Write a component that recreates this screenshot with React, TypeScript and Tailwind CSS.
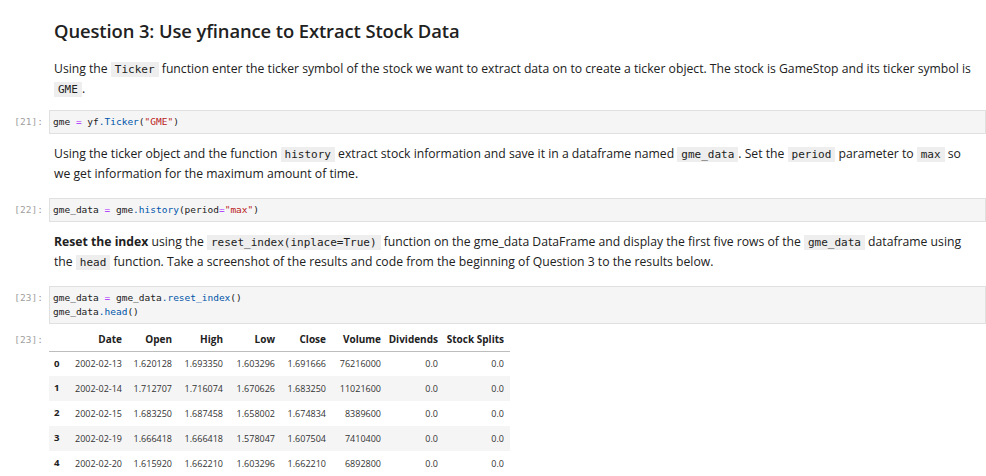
import React from "react";

const mono = "font-['DejaVu_Sans_Mono',monospace]";

const Code = ({ children }: { children: React.ReactNode }) => (
  <code className={`${mono} bg-[#eeeeee] px-[4px] py-[1px] text-[11px] leading-[12px] text-[#212121]`}>{children}</code>
);

const Prompt = ({ n }: { n: number }) => (
  <div className={`${mono} w-[49px] shrink-0 pr-[6px] text-right text-[9.5px] leading-[14px] text-[#a0a0a0]`}>
    [{n}]:
  </div>
);

const Op = ({ children }: { children: React.ReactNode }) => <span className="text-[#aa22ff]">{children}</span>;
const Prop = ({ children }: { children: React.ReactNode }) => <span className="text-[#0055aa]">{children}</span>;
const Str = ({ children }: { children: React.ReactNode }) => <span className="text-[#ba2121]">{children}</span>;

const CodeCell = ({ n, children, className = "" }: { n: number; children: React.ReactNode; className?: string }) => (
  <div className={`flex items-start ${className}`}>
    <div className="pt-[5px]">
      <Prompt n={n} />
    </div>
    <div
      className={`${mono} flex-1 border border-[#e0e0e0] bg-[#f5f5f5] px-[3px] py-[4px] text-[9.5px] leading-[14px] text-[#212121] whitespace-pre`}
    >
      {children}
    </div>
  </div>
);

const rows = [
  ["0", "2002-02-13", "1.620128", "1.693350", "1.603296", "1.691666", "76216000", "0.0", "0.0"],
  ["1", "2002-02-14", "1.712707", "1.716074", "1.670626", "1.683250", "11021600", "0.0", "0.0"],
  ["2", "2002-02-15", "1.683250", "1.687458", "1.658002", "1.674834", "8389600", "0.0", "0.0"],
  ["3", "2002-02-19", "1.666418", "1.666418", "1.578047", "1.607504", "7410400", "0.0", "0.0"],
  ["4", "2002-02-20", "1.615920", "1.662210", "1.603296", "1.662210", "6892800", "0.0", "0.0"],
];

const headers = ["", "Date", "Open", "High", "Low", "Close", "Volume", "Dividends", "Stock Splits"];
const widths = ["w-[16px]", "w-[63px]", "w-[50px]", "w-[51px]", "w-[52px]", "w-[51px]", "w-[55px]", "w-[57px]", "w-[66px]"];

export default function App() {
  return (
    <div className="h-[476px] w-[986px] overflow-hidden bg-white font-['Open_Sans',sans-serif] text-[#212121]">
      {/* HEADING */}
      <div className="pl-[54px] pt-[17px]">
        <h2 className="text-[18.4px] font-semibold leading-[28px] tracking-[-0.1px]">
          Question 3: Use yfinance to Extract Stock Data
        </h2>
        <p className="mt-[14px] whitespace-nowrap text-[12.2px] leading-[19.5px]">
          Using the <Code>Ticker</Code> function enter the ticker symbol of the stock we want to extract data on to create a ticker object. The stock is GameStop and its ticker symbol is
          <br />
          <Code>GME</Code>.
        </p>
      </div>

      <CodeCell n={21} className="mt-[12px]">
        gme <Op>=</Op> yf<Prop>.Ticker</Prop>(<Str>"GME"</Str>)
      </CodeCell>

      <div className="pl-[54px]">
        <p className="mt-[10px] whitespace-nowrap text-[12.2px] leading-[19.5px]">
          Using the ticker object and the function <Code>history</Code> extract stock information and save it in a dataframe named <Code>gme_data</Code>. Set the <Code>period</Code> parameter to <Code>max</Code> so
          <br />
          we get information for the maximum amount of time.
        </p>
      </div>

      <CodeCell n={22} className="mt-[15px]">
        gme_data <Op>=</Op> gme<Prop>.history</Prop>(period<Op>=</Op><Str>"max"</Str>)
      </CodeCell>

      <div className="pl-[54px]">
        <p className="mt-[10px] whitespace-nowrap text-[12.2px] leading-[19.5px]">
          <b className="font-bold">Reset the index</b> using the <Code>reset_index(inplace=True)</Code> function on the gme_data DataFrame and display the first five rows of the <Code>gme_data</Code> dataframe using
          <br />
          the <Code>head</Code> function. Take a screenshot of the results and code from the beginning of Question 3 to the results below.
        </p>
      </div>

      <CodeCell n={23} className="mt-[15px]">
        gme_data <Op>=</Op> gme_data<Prop>.reset_index</Prop>(){"\n"}gme_data<Prop>.head</Prop>()
      </CodeCell>

      {/* OUTPUT */}
      <div className="mt-[5px] flex items-start">
        <div className="pt-[4px]">
          <Prompt n={23} />
        </div>
        <table className="table-fixed border-collapse text-[9px] text-[#333333]">
          <thead>
            <tr className="h-[22px] border-b border-[#bdbdbd]">
              {headers.map((h, i) => (
                <th key={i} className={`${widths[i]} pr-[6px] text-right text-[10px] font-bold text-[#212121]`}>
                  {h}
                </th>
              ))}
            </tr>
          </thead>
          <tbody>
            {rows.map((r, ri) => (
              <tr key={ri} className={`h-[25px] ${ri % 2 === 1 ? "bg-[#f5f5f5]" : ""}`}>
                {r.map((c, ci) =>
                  ci === 0 ? (
                    <th key={ci} className="pl-[5px] text-left text-[9.6px] font-bold text-[#212121]">
                      {c}
                    </th>
                  ) : (
                    <td key={ci} className="pr-[6px] text-right">
                      {c}
                    </td>
                  )
                )}
              </tr>
            ))}
          </tbody>
        </table>
      </div>
    </div>
  );
}
